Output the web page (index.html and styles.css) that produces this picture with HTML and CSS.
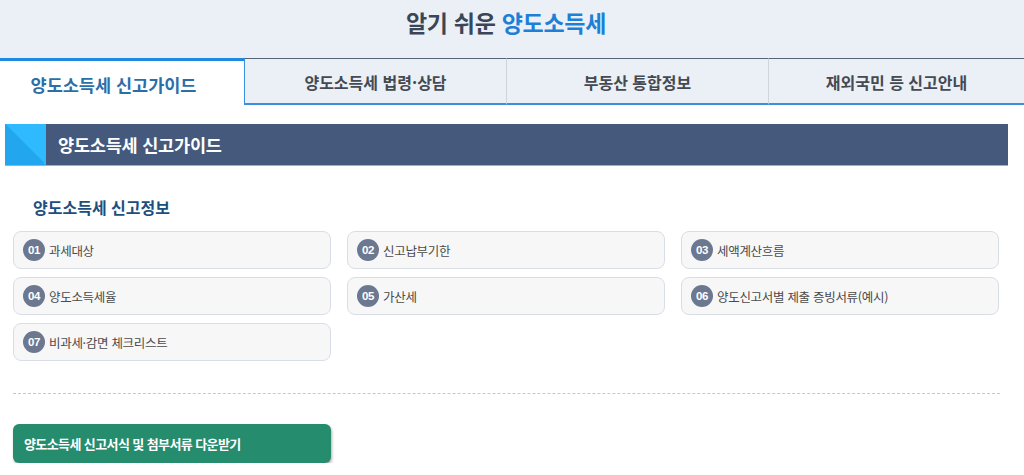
FILE: index.html
```html
<!DOCTYPE html>
<html lang="ko">
<head>
  <meta charset="UTF-8" />
  <meta name="viewport" content="width=device-width, initial-scale=1.0" />
  <title>알기 쉬운 양도소득세</title>
  <link rel="stylesheet" href="styles.css">
</head>
<body>
  <header class="top">
    <h1>알기 쉬운 <span>양도소득세</span></h1>
  </header>

  <nav class="tabs">
    <a class="tab active">양도소득세 신고가이드</a>
    <a class="tab first">양도소득세 법령·상담</a>
    <a class="tab">부동산 통합정보</a>
    <a class="tab">재외국민 등 신고안내</a>
  </nav>

  <main class="content">
    <div class="section-bar">
      <span class="section-mark"></span>
      <h2>양도소득세 신고가이드</h2>
    </div>

    <h3 class="sub-title">양도소득세 신고정보</h3>

    <div class="info-grid">
      <a class="info-item"><b>01</b>과세대상</a>
      <a class="info-item"><b>02</b>신고납부기한</a>
      <a class="info-item"><b>03</b>세액계산흐름</a>
      <a class="info-item"><b>04</b>양도소득세율</a>
      <a class="info-item"><b>05</b>가산세</a>
      <a class="info-item"><b>06</b>양도신고서별 제출 증빙서류(예시)</a>
      <a class="info-item"><b>07</b>비과세·감면 체크리스트</a>
    </div>

    <hr class="divider" />

    <a class="download-btn">양도소득세 신고서식 및 첨부서류 다운받기</a>
  </main>
</body>
</html>
```

FILE: styles.css
```css
* {
  box-sizing: border-box;
  margin: 0;
  padding: 0;
}
body {
  background: #fff;
  font-family: 'Noto Sans CJK KR', 'Noto Sans', sans-serif;
  color: #444;
}
.top {
  height: 58px;
  background: #ebf0f6;
  display: flex;
  align-items: center;
  justify-content: center;
  padding: 0 12px 14px 0;
}
.top h1 {
  font-size: 23px;
  font-weight: 700;
  color: #3a4656;
  letter-spacing: -0.3px;
}
.top h1 span {
  color: #1e7fd6;
}
.tabs {
  display: grid;
  grid-template-columns: 244px 262px 262px 1fr;
  height: 47px;
}
.tab {
  display: flex;
  align-items: center;
  justify-content: center;
  background: #ebf0f6;
  border-top: 1px solid #56647a;
  border-bottom: 2px solid #3b8fe0;
  border-left: 1px solid #cfd5dc;
  font-size: 16px;
  font-weight: 700;
  color: #454a52;
  padding-top: 1px;
}
.tab.first {
  border-left-color: #3b8fe0;
}
.tab.active {
  background: #fff;
  border-top: 3px solid #1e88e5;
  border-bottom: none;
  border-left: none;
  font-size: 17.5px;
  color: #2a6fa8;
  padding: 2px 17px 0 0;
}
.content {
  padding: 19px 16px 0 5px;
}
.section-bar {
  display: flex;
  align-items: center;
  height: 42px;
  background: #44597b;
  border-bottom: 1px solid #9fb0c8;
}
.section-mark {
  width: 41px;
  height: 100%;
  background: linear-gradient(to bottom left, #2fbaff 50%, #22a6ee 50%);
}
.section-bar h2 {
  margin-left: 12px;
  font-size: 17.5px;
  font-weight: 700;
  color: #fff;
  letter-spacing: -0.2px;
}
.sub-title {
  margin: 30px 0 0 28px;
  font-size: 16px;
  font-weight: 700;
  color: #1b4f80;
  line-height: 22px;
}
.info-grid {
  display: grid;
  grid-template-columns: repeat(3, 318px);
  grid-auto-rows: 38px;
  column-gap: 16px;
  row-gap: 8px;
  margin: 13px 0 0 8px;
}
.info-item {
  display: flex;
  align-items: center;
  gap: 4px;
  padding-left: 9px;
  background: #f7f7f8;
  border: 1px solid #d9dee6;
  border-radius: 8px;
  font-size: 12.5px;
  color: #4a4a4a;
  letter-spacing: -0.3px;
}
.info-item b {
  display: flex;
  align-items: center;
  justify-content: center;
  width: 22px;
  height: 22px;
  border-radius: 50%;
  background: #6b7890;
  color: #fff;
  font-family: 'Liberation Sans', sans-serif;
  font-size: 11.5px;
  font-weight: 700;
  letter-spacing: -0.5px;
}
.divider {
  margin: 32px 8px 0 8px;
  border: none;
  border-top: 1px dashed #c4c8cc;
}
.download-btn {
  display: flex;
  align-items: center;
  width: 318px;
  height: 39px;
  margin: 30px 0 0 8px;
  padding-left: 11px;
  background: #268c6e;
  border-radius: 6px;
  box-shadow: 1px 2px 3px rgba(0, 0, 0, 0.3);
  color: #fff;
  font-size: 13px;
  font-weight: 700;
  letter-spacing: -0.6px;
}
```
